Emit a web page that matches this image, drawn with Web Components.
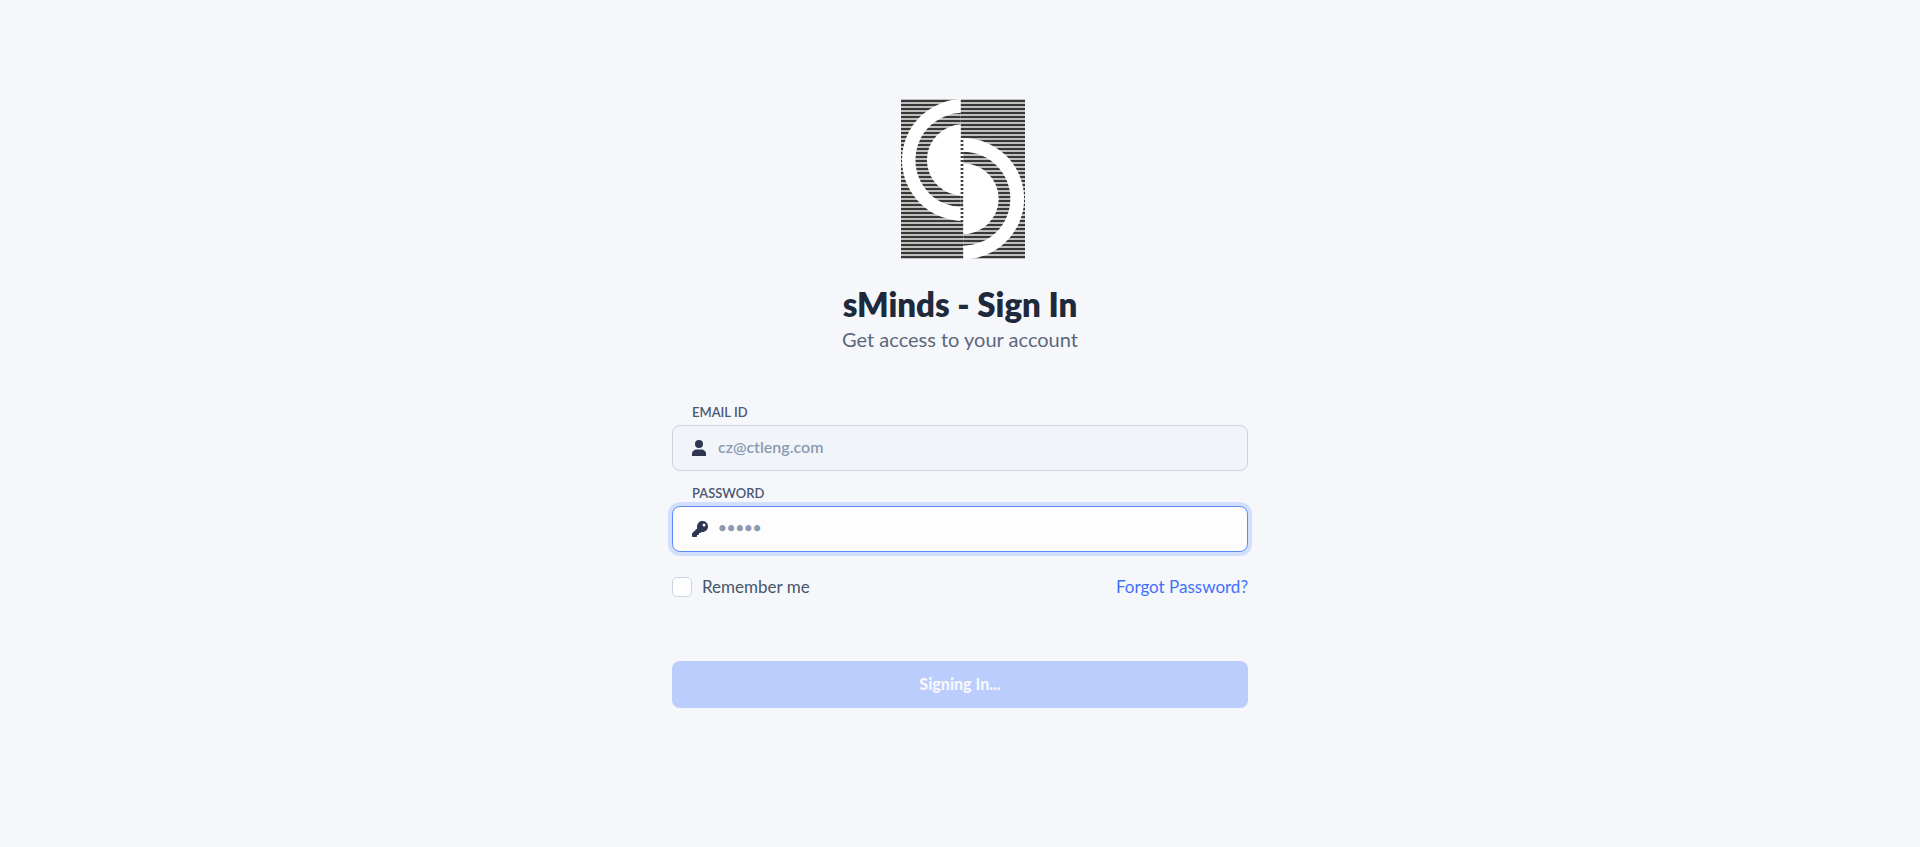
<!DOCTYPE html>
<html lang="en">
<head>
<meta charset="utf-8">
<meta name="viewport" content="width=device-width, initial-scale=1">
<title>sMinds - Sign In</title>
<style>
  body { margin: 0; min-height: 100vh; background: #f5f7fb; color: #475569; font-family: Lato, sans-serif; font-size: 17px; line-height: 24px; }
</style>
</head>
<body>
<sign-in-page></sign-in-page>

<template id="logo-template">
  <style>
    :host { display: block; }
    svg { display: block; }
  </style>
  <svg width="124" height="160" viewBox="0 0 123 160" preserveAspectRatio="none" role="img" aria-label="sMinds logo">
    <defs>
      <pattern id="lines" width="123" height="4" patternUnits="userSpaceOnUse">
        <rect width="123" height="4" fill="#bdc0bd"/>
        <rect y="1" width="123" height="2" fill="#383838"/>
      </pattern>
      <pattern id="dots" width="123" height="4" patternUnits="userSpaceOnUse">
        <rect width="123" height="4" fill="#fff"/>
        <rect y="1" width="123" height="2" fill="#3c3c3c"/>
      </pattern>
      <clipPath id="left"><rect width="59.3" height="160"/></clipPath>
      <clipPath id="right"><rect x="61.7" width="61.3" height="160"/></clipPath>
    </defs>
    <rect width="123" height="160" fill="url(#lines)"/>
    <g clip-path="url(#left)">
      <circle cx="62" cy="61" r="61" fill="#fff"/>
      <circle cx="61.5" cy="61" r="47.2" fill="url(#lines)"/>
      <circle cx="61.5" cy="61" r="35.8" fill="#fff"/>
    </g>
    <g clip-path="url(#right)">
      <circle cx="61.5" cy="99.7" r="60.6" fill="#fff"/>
      <circle cx="61.5" cy="99.7" r="47" fill="url(#lines)"/>
      <circle cx="61.5" cy="99.7" r="35.4" fill="#fff"/>
    </g>
    <rect x="59.3" y="39" width="2.4" height="58" fill="url(#dots)"/>
    <rect x="59.3" y="108" width="2.4" height="14" fill="url(#dots)"/>
  </svg>
</template>

<template id="field-template">
  <style>
    :host { display: block; }
    label { display: block; padding: 0 20px; margin-bottom: 3px; font-size: 13px; font-weight: 600; line-height: 20px; color: #4b5773; text-transform: uppercase; }
    .box { display: flex; align-items: center; gap: 9px; box-sizing: border-box; height: 46px; padding: 0 19px; border: 1px solid #cbd5e1; border-radius: 8px; background: #f1f5f9; color: #2d3550; }
    .icon { display: flex; width: 17px; }
    input { flex: 1; min-width: 0; box-sizing: border-box; height: 44px; margin: 0; padding: 0 0 4px; border: 0; outline: 0; background: transparent; font: 600 16px/24px Lato, sans-serif; color: #8b99b2; -webkit-text-fill-color: #8b99b2; opacity: 1; }
    input[type="password"] { font-size: 15px; }
    :host([active]) .box { border-color: #5a8df8; background: #fdfdfd; box-shadow: 0 0 0 4px #d2dffc; }
  </style>
  <label for="control"></label>
  <div class="box"><span class="icon"><slot></slot></span><input id="control"></div>
</template>

<template id="check-template">
  <style>
    :host { display: block; }
    label { display: flex; align-items: center; gap: 10px; }
    input { appearance: none; box-sizing: border-box; width: 20px; height: 20px; margin: 0; border: 1px solid #cbd5e1; border-radius: 5px; background: #fff; }
    input:checked { background: #4070f4; }
  </style>
  <label><input type="checkbox"><slot></slot></label>
</template>

<template id="button-template">
  <style>
    :host { display: block; }
    button { display: block; width: 100%; height: 47px; padding: 0 0 2px; border: 0; border-radius: 8px; background: #bbcdfc; color: #f5f7fb; font: 900 16px/24px Lato, sans-serif; }
  </style>
  <button type="button" disabled><slot></slot></button>
</template>

<template id="page-template">
  <style>
    :host { display: block; padding: 99px 16px 64px; }
    main { max-width: 576px; margin: 0 auto; }
    header { display: flex; flex-direction: column; align-items: center; }
    brand-logo { padding-left: 6px; }
    h1 { margin: 25px 0 0; font-size: 33px; font-weight: 800; line-height: 40px; color: #1e293b; }
    p { margin: 1px 0 0; font-size: 20px; font-weight: 400; line-height: 28px; color: #5b677b; }
    form { display: flex; flex-direction: column; margin-top: 49px; }
    text-field + text-field { margin-top: 12px; }
    .options { display: flex; justify-content: space-between; align-items: center; margin: 23px 0 62px; }
    a { color: #4070fa; text-decoration: none; }
    svg { display: block; }
  </style>
  <main>
    <header>
      <brand-logo></brand-logo>
      <h1>sMinds - Sign In</h1>
      <p>Get access to your account</p>
    </header>
    <form>
      <text-field label="Email ID" type="email" value="cz@ctleng.com" locked>
        <svg width="14" height="16" viewBox="0 0 14 16" fill="currentColor" aria-hidden="true"><circle cx="7" cy="4" r="4"/><path d="M0 16v-2.200C0 11.200 2.200 9.500 4.800 9.500h4.400c2.600 0 4.800 1.700 4.800 4.300V16z"/></svg>
      </text-field>
      <text-field label="Password" type="password" value="•••••" active>
        <svg width="16" height="16" viewBox="0 0 512 512" fill="currentColor" aria-hidden="true"><path d="M512 176c0 97.200-78.800 176-176 176-11.200 0-22.200-1.100-32.800-3.100l-24 27A24 24 0 0 1 261.200 384H224v40a24 24 0 0 1-24 24h-40v40a24 24 0 0 1-24 24H24a24 24 0 0 1-24-24v-78.100c0-6.400 2.500-12.500 7-17l161.800-161.800A176 176 0 1 1 512 176zM336 128a48 48 0 1 0 96 0 48 48 0 1 0-96 0z"/></svg>
      </text-field>
      <div class="options">
        <check-option>Remember me</check-option>
        <a href="#forgot">Forgot Password?</a>
      </div>
      <submit-button>Signing In...</submit-button>
    </form>
  </main>
</template>

<script>
  class TemplateElement extends HTMLElement {
    constructor() {
      super();
      const template = document.getElementById(this.constructor.template);
      this.attachShadow({ mode: 'open' }).append(template.content.cloneNode(true));
    }
  }

  class BrandLogo extends TemplateElement { static template = 'logo-template'; }
  class CheckOption extends TemplateElement { static template = 'check-template'; }
  class SubmitButton extends TemplateElement { static template = 'button-template'; }
  class SignInPage extends TemplateElement { static template = 'page-template'; }

  class TextField extends TemplateElement {
    static template = 'field-template';
    connectedCallback() {
      const input = this.shadowRoot.querySelector('input');
      this.shadowRoot.querySelector('label').textContent = this.getAttribute('label');
      input.type = this.getAttribute('type');
      input.value = this.getAttribute('value');
      input.disabled = this.hasAttribute('locked');
    }
  }

  customElements.define('brand-logo', BrandLogo);
  customElements.define('text-field', TextField);
  customElements.define('check-option', CheckOption);
  customElements.define('submit-button', SubmitButton);
  customElements.define('sign-in-page', SignInPage);
</script>
</body>
</html>
